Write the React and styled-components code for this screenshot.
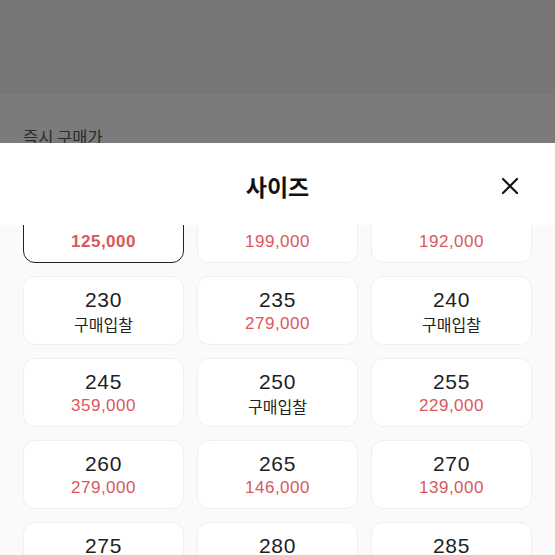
import React from 'react';
import styled, { createGlobalStyle } from 'styled-components';

const GlobalStyle = createGlobalStyle`
    html, body {
        margin: 0;
        padding: 0;
        height: 555px;
        overflow: hidden;
        font-family: "Liberation Sans", "Noto Sans CJK KR", sans-serif;
    }
`;

const Page = styled.div`
    width: 555px;
    height: 555px;
    display: flex;
    flex-direction: column;
    overflow: hidden;
`;

const TopBand = styled.div`
    height: 94px;
    background-color: #767675;
`;

const DimSection = styled.div`
    height: 49px;
    background-color: #7b7b7b;
    padding: 33px 0 0 23px;
    box-sizing: border-box;
    overflow: hidden;
    font-family: "Noto Sans CJK KR", sans-serif;
    font-size: 16.5px;
    line-height: 20px;
    color: #2c2c2c;
`;

const Sheet = styled.div`
    flex: 1;
    display: flex;
    flex-direction: column;
    background-color: #ffffff;
    border-radius: 20px 20px 0 0;
    overflow: hidden;
`;

const Header = styled.div`
    height: 82px;
    flex-shrink: 0;
    display: flex;
    align-items: center;
    justify-content: center;
    position: relative;
`;

const Title = styled.h2`
    margin: 0;
    padding-top: 3px;
    font-family: "Noto Sans CJK KR", sans-serif;
    font-size: 23px;
    font-weight: 700;
    color: #111;
`;

const CloseButton = styled.button`
    position: absolute;
    right: 35px;
    top: 33px;
    width: 20px;
    height: 20px;
    padding: 0;
    border: none;
    background: none;
    cursor: pointer;
`;

const Body = styled.div`
    flex: 1;
    background-color: #fafafa;
    overflow: hidden;
`;

const Grid = styled.div`
    display: grid;
    grid-template-columns: repeat(3, 1fr);
    gap: 13px;
    padding: 0 23px;
    margin-top: -31px;
`;

const Card = styled.div`
    height: 69px;
    box-sizing: border-box;
    background-color: #fff;
    border: ${p => (p.$selected ? '1.5px solid #222' : '1px solid #efefef')};
    border-radius: 12px;
    display: flex;
    flex-direction: column;
    align-items: center;
    justify-content: center;
    padding-top: 2px;
`;

const Size = styled.div`
    font-size: 21px;
    line-height: 24px;
    letter-spacing: 0.6px;
    color: #1e1e1e;
`;

const Price = styled.div`
    line-height: 24px;
    color: ${p => (p.$bid ? '#222' : '#da585c')};
    font-weight: ${p => (p.$selected ? 700 : 400)};
    font-family: ${p => (p.$bid ? '"Noto Sans CJK KR", sans-serif' : 'inherit')};
    font-size: ${p => (p.$bid ? '16px' : '17px')};
    letter-spacing: ${p => (p.$bid ? '0' : '0.5px')};
`;

const sizes = [
    { size: '215', price: '125,000', selected: true },
    { size: '220', price: '199,000' },
    { size: '225', price: '192,000' },
    { size: '230', price: null },
    { size: '235', price: '279,000' },
    { size: '240', price: null },
    { size: '245', price: '359,000' },
    { size: '250', price: null },
    { size: '255', price: '229,000' },
    { size: '260', price: '279,000' },
    { size: '265', price: '146,000' },
    { size: '270', price: '139,000' },
    { size: '275', price: '189,000' },
    { size: '280', price: '159,000' },
    { size: '285', price: '179,000' },
];

export default function App() {
    return (
        <Page>
            <GlobalStyle />
            <TopBand />
            <DimSection>즉시 구매가</DimSection>
            <Sheet>
                <Header>
                    <Title>사이즈</Title>
                    <CloseButton aria-label="닫기">
                        <svg width="20" height="20" viewBox="0 0 20 20">
                            <path d="M3 3 L17 17 M17 3 L3 17" stroke="#111" strokeWidth="2.2" strokeLinecap="round" />
                        </svg>
                    </CloseButton>
                </Header>
                <Body>
                    <Grid>
                        {sizes.map(item => (
                            <Card key={item.size} $selected={item.selected}>
                                <Size>{item.size}</Size>
                                {item.price
                                    ? <Price $selected={item.selected}>{item.price}</Price>
                                    : <Price $bid>구매입찰</Price>}
                            </Card>
                        ))}
                    </Grid>
                </Body>
            </Sheet>
        </Page>
    );
}
